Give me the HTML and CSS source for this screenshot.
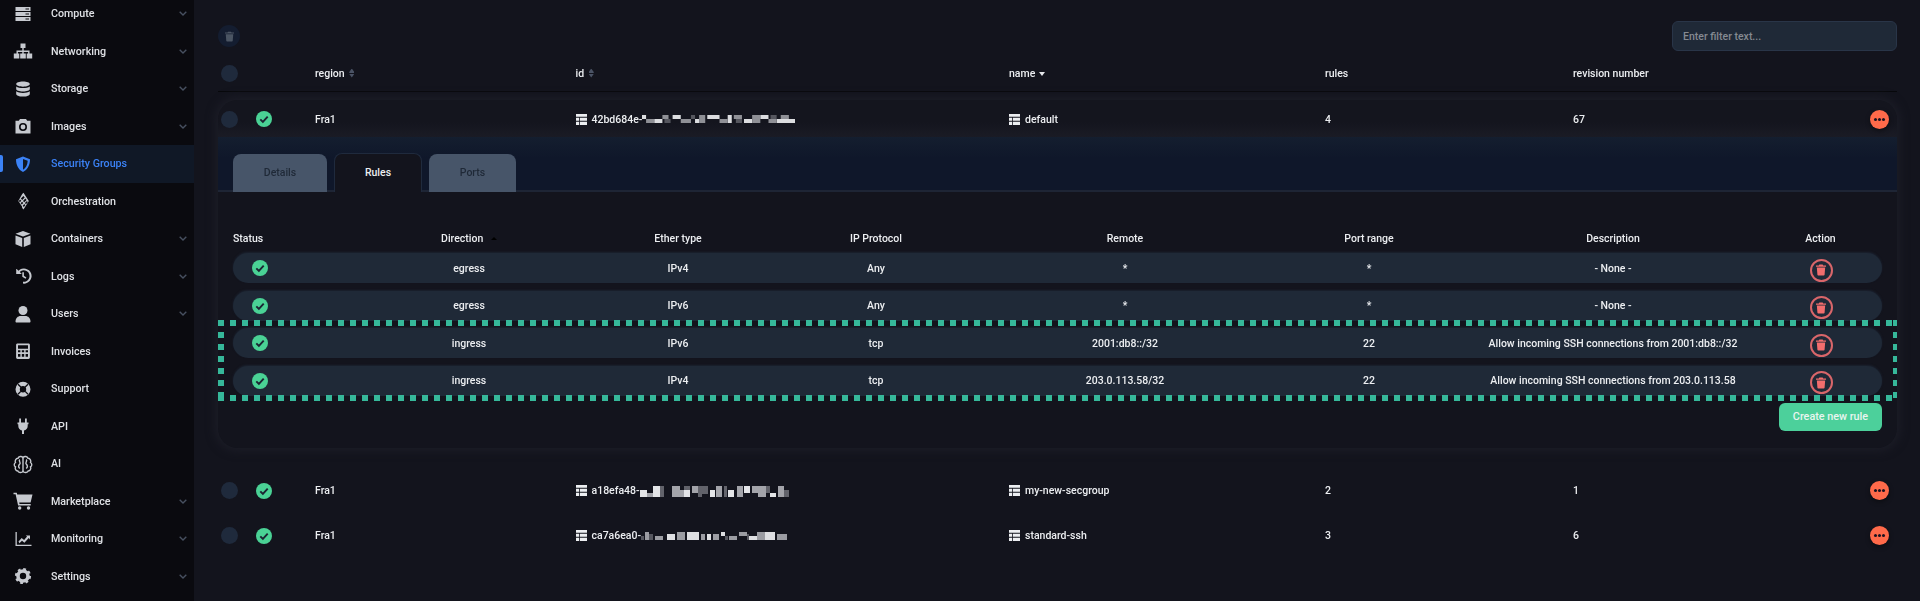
FILE: index.html
```html
<!DOCTYPE html>
<html lang="en">
<head>
<meta charset="utf-8">
<title>Security Groups</title>
<link rel="stylesheet" href="styles.css">
</head>
<body>
<svg class="defs" width="0" height="0" aria-hidden="true">
  <symbol id="check" viewBox="0 0 16 16"><circle cx="8" cy="8" r="8" fill="#4ad295"/><path d="M4.300 8.300l2.600 2.600 4.800-5.200" fill="none" stroke="#1c2533" stroke-width="1.900"/></symbol>
  <symbol id="table" viewBox="0 0 11 11"><path fill="#eceef1" d="M0 0h11v2.800H0zM0 3.700h3.200v3.100H0zM4 3.700h7v3.100H4zM0 7.700h3.200V11H0zM4 7.700h7V11H4z"/></symbol>
  <symbol id="chev" viewBox="0 0 8 5"><path d="M.7.7L4 4l3.300-3.300" fill="none" stroke="#475060" stroke-width="1.400"/></symbol>
  <symbol id="trash" viewBox="0 0 12 13"><path fill="currentColor" d="M4 0h4l.6 1H12v1.500H0V1h3.400zM1 3.500h10l-.7 8.600c0 .5-.5.9-1 .9H2.700c-.5 0-1-.4-1-.9z"/></symbol>
  <symbol id="dots" viewBox="0 0 19 19"><circle cx="5.500" cy="9.500" r="1.500"/><circle cx="9.500" cy="9.500" r="1.500"/><circle cx="13.500" cy="9.500" r="1.500"/></symbol>
  <symbol id="m1" viewBox="0 0 150 8" preserveAspectRatio="none"><path fill="#dcdde0" d="M0 0h4v4H0zM12 4h8v4h-8zM30 0h8v4h-8zM52 4h4v4h-4zM64 0h12v4H64zM84 0h4v8h-4zM100 4h8v4h-8zM116 0h8v4h-8zM132 4h18v4h-18z"/><path fill="#8f9096" d="M4 4h8v4H4zM20 0h6v4h-6zM38 4h10v4H38zM56 0h6v8h-6zM76 4h8v4h-8zM90 0h8v4h-8zM108 0h8v8h-8zM124 4h8v4h-8zM136 0h8v4h-8z"/><path fill="#55565e" d="M22 4h6v4h-6zM48 0h4v4h-4zM92 4h6v4h-6zM126 0h6v4h-6z"/></symbol>
  <symbol id="m2" viewBox="0 0 150 12" preserveAspectRatio="none"><path fill="#e4e5e8" d="M0 5h7v7H0zM13 1h7v11h-7zM44 5h6v7h-6zM70 5h5v7h-5zM88 5h6v7h-6zM104 1h6v7h-6zM130 8h6v4h-6z"/><path fill="#a3a4aa" d="M7 8h6v4H7zM32 1h8v11h-8zM40 5h4v7h-4zM52 1h6v7h-6zM76 1h6v11h-6zM97 1h6v11h-6zM112 1h14v7h-14zM118 8h8v4h-8zM138 1h6v11h-6z"/><path fill="#62636b" d="M20 1h4v11h-4zM44 1h6v4h-6zM58 1h4v11h-4zM62 1h6v8h-6zM84 1h3v11h-3zM126 1h4v7h-4zM144 5h5v7h-5z"/></symbol>
  <symbol id="m3" viewBox="0 0 150 8" preserveAspectRatio="none"><path fill="#dedfe2" d="M26 2h8v6h-8zM46 0h12v8H46zM66 2h4v6h-4zM80 0h4v4h-4zM108 4h8v4h-8zM124 0h10v8h-10z"/><path fill="#9b9ca2" d="M4 0h4v8H4zM14 4h8v4h-8zM36 0h8v8h-8zM60 2h4v6h-4zM72 2h6v6h-6zM88 4h8v4h-8zM98 0h8v4H98zM116 0h8v8h-8zM136 2h10v6h-10z"/><path fill="#55565e" d="M0 4h3v4H0zM8 2h4v6H8zM84 4h3v4h-3zM106 2h2v6h-2z"/></symbol>
</svg>

<aside class="sidebar">
  <nav class="nav">
    <a class="nav-item"><svg class="ico" viewBox="0 0 20 20"><path d="M2.500 3h15v4h-15zM2.500 8h15v4h-15zM2.500 13h15v4h-15z"/><path class="cut" d="M12.500 4.400h3.500v1.200h-3.500zM12.500 9.400h3.500v1.200h-3.500zM12.500 14.400h3.500v1.200h-3.500z"/></svg><span>Compute</span><svg class="chev"><use href="#chev"/></svg></a>
    <a class="nav-item"><svg class="ico" viewBox="0 0 20 20"><path d="M7.500 2.500h5v4.500h-5zM9.300 7h1.400v2.500h5.800v3h-1.400v-1.600H10.700v1.600H9.300v-1.600H4.900v1.600H3.500v-3h5.800zM.8 12.500h5.500v5H.8zM7.200 12.500h5.600v5H7.200zM13.700 12.500h5.500v5h-5.500z"/></svg><span>Networking</span><svg class="chev"><use href="#chev"/></svg></a>
    <a class="nav-item"><svg class="ico" viewBox="0 0 20 20"><path d="M10 2.500c3.900 0 6.800 1.100 6.800 2.600S13.900 7.700 10 7.700 3.200 6.600 3.200 5.100 6.100 2.500 10 2.500zM3.200 7.400c1.500 1.100 4 1.600 6.800 1.600s5.300-.5 6.800-1.600v2.700c0 1.400-2.900 2.500-6.800 2.500s-6.800-1.100-6.800-2.500zM3.200 12.200c1.500 1.100 4 1.700 6.800 1.700s5.300-.6 6.800-1.700v2.800c0 1.500-2.900 2.600-6.800 2.600s-6.800-1.100-6.800-2.600z"/></svg><span>Storage</span><svg class="chev"><use href="#chev"/></svg></a>
    <a class="nav-item"><svg class="ico" viewBox="0 0 20 20"><path fill-rule="evenodd" d="M7 3h6l1.200 1.800h3.300v12.700h-15V4.800h3.300zM10 7a4 4 0 100 8 4 4 0 000-8zm0 1.600a2.400 2.400 0 110 4.800 2.400 2.400 0 010-4.800z"/></svg><span>Images</span><svg class="chev"><use href="#chev"/></svg></a>
    <a class="nav-item active"><svg class="ico" viewBox="0 0 20 20"><path fill-rule="evenodd" d="M10 2.500l7 2.800c0 6-2.500 10.500-7 12.700-4.500-2.200-7-6.700-7-12.700zM10 5v10.800c2.800-1.700 4.500-4.900 4.700-9z"/></svg><span>Security Groups</span></a>
    <a class="nav-item"><svg class="ico" viewBox="0 0 20 20"><path fill-rule="evenodd" d="M10.500 1.800l5.300 8.200-5.300 8.400-1.300-1.500-.2-1.400-3.700-5.500 3.900-6.900zM10.400 5l-2.500 2.600 1.300 1.300L11.700 6.500zM7 8.500L5.900 10l1 1.200 1.400-1.400zM12.300 7.600L10 9.900l1.200 1.300 2.400-2.300zM9 10.700l-1.300 1.500 1.100 1.400 1.500-1.600zM14 10l-2.100 2.100 1 1.200 1.800-2.100zM11.300 13l-1.500 1.700 1 1.200 1.500-1.700z"/></svg><span>Orchestration</span></a>
    <a class="nav-item"><svg class="ico" viewBox="0 0 20 20"><path d="M10 2l7.500 2.700-7.500 2.900-7.500-2.900zM2.500 6.400l6.700 2.500v9L2.500 15.200zM17.500 6.400v8.800l-6.700 2.700v-9z"/></svg><span>Containers</span><svg class="chev"><use href="#chev"/></svg></a>
    <a class="nav-item"><svg class="ico" viewBox="0 0 20 20"><path d="M3.700 3l1.800 1.800A7.600 7.600 0 1110 17.600v-1.900a5.700 5.700 0 10-3.200-9.700l2 2H3.200V3z"/><path d="M9.300 6.300h1.600v3.500l2.500 1.600-.9 1.300-3.200-2z"/></svg><span>Logs</span><svg class="chev"><use href="#chev"/></svg></a>
    <a class="nav-item"><svg class="ico" viewBox="0 0 20 20"><circle cx="10" cy="6.500" r="4.500"/><path d="M2.500 17.500c0-3.500 2.500-5.600 5-5.600h5c2.500 0 5 2.100 5 5.600 0 .6-.5 1-1 1h-13c-.5 0-1-.4-1-1z"/></svg><span>Users</span><svg class="chev"><use href="#chev"/></svg></a>
    <a class="nav-item"><svg class="ico" viewBox="0 0 20 20"><path fill-rule="evenodd" d="M4.500 2.500h11c.8 0 1.400.6 1.400 1.400v12.700c0 .8-.6 1.400-1.400 1.400h-11c-.8 0-1.400-.6-1.400-1.400V3.900c0-.8.6-1.400 1.400-1.400zM5 4.300v3.400h10V4.300zM5 9.300v2h2.400v-2zM8.800 9.300v2h2.400v-2zM12.600 9.300v2H15v-2zM5 13v2.800h2.400V13zM8.800 13v2.800h2.400V13zM12.600 13v2.800H15V13z"/></svg><span>Invoices</span></a>
    <a class="nav-item"><svg class="ico" viewBox="0 0 20 20"><path fill-rule="evenodd" d="M10 2.700a7.500 7.500 0 110 15 7.500 7.500 0 010-15zm0 4.300a3.200 3.200 0 100 6.400 3.200 3.200 0 000-6.400z"/><path class="cut-line" d="M5 5.200l2.800 2.800M15 5.200l-2.800 2.800M5 15.200l2.800-2.800M15 15.200l-2.800-2.800"/></svg><span>Support</span></a>
    <a class="nav-item"><svg class="ico" viewBox="0 0 20 20"><path d="M6.200 2.500h1.800v4H12v-4h1.800v4h1.700v1.800h-.8v1.700c0 2.500-1.700 4-3.700 4.400v3.500H9v-3.500C7 14 5.300 12.500 5.300 10V8.300h-.8V6.500h1.700z"/></svg><span>API</span></a>
    <a class="nav-item"><svg class="ico" viewBox="0 0 20 20"><path class="brain" d="M10 3.600C8.600 1.900 5.600 2.300 5 4.300 2.800 4.500 1.600 6.800 2.500 8.500c-1.700 1-1.700 3.400 0 4.400-.9 1.900.4 3.900 2.300 4.100.6 1.700 3.700 2.200 5.200.4 1.500 1.800 4.600 1.300 5.200-.4 1.900-.2 3.200-2.200 2.300-4.100 1.700-1 1.700-3.400 0-4.400.9-1.700-.3-4-2.500-4.200-.6-2-3.600-2.400-5-.7z"/><path class="brain" d="M10 3.600v14.300M6.800 5.500c-1.800 1.700 1.500 3 0 4.500s-1.700 3 0 4.500M13.200 5.500c1.800 1.700-1.500 3 0 4.500s1.700 3 0 4.500"/></svg><span>AI</span></a>
    <a class="nav-item"><svg class="ico" viewBox="0 0 20 20"><path d="M.5 1.800h3.300l.4 1.800h15.300l-1.900 8H6.200l.3 1.400h11.200v1.500H5.100L2.600 3.300H.5z"/><circle cx="6.700" cy="17" r="1.700"/><circle cx="15.500" cy="17" r="1.700"/></svg><span>Marketplace</span><svg class="chev"><use href="#chev"/></svg></a>
    <a class="nav-item"><svg class="ico" viewBox="0 0 20 20"><path d="M2.500 3h1.300v12.700h14.700V17h-16z"/><path d="M5.500 12.500l3.200-3.400 2.400 2 3-3.500-1.400-1h4.300v3.800l-1.300-1.400-4.300 4.700-2.400-2-2.600 2.500z"/></svg><span>Monitoring</span><svg class="chev"><use href="#chev"/></svg></a>
    <a class="nav-item"><svg class="ico" viewBox="0 0 20 20"><circle class="gear-ring" cx="10" cy="10" r="5"/><circle class="gear-teeth" cx="10" cy="10" r="6.800"/></svg><span>Settings</span><svg class="chev"><use href="#chev"/></svg></a>
  </nav>
</aside>

<main class="main">
  <div class="toolbar">
    <button class="bulk-delete"><svg class="bulk-ico"><use href="#trash"/></svg></button>
    <input class="filter" type="text" placeholder="Enter filter text...">
  </div>

  <div class="grid head">
    <div class="sel"><span class="radio"></span></div>
    <div>region <span class="sort"></span></div>
    <div>id <span class="sort"></span></div>
    <div>name <span class="caret"></span></div>
    <div>rules</div>
    <div>revision number</div>
    <div></div>
  </div>

  <section class="card">
    <div class="grid row first">
      <div class="sel"><span class="radio"></span><svg class="ok"><use href="#check"/></svg></div>
      <div>Fra1</div>
      <div class="idcell"><svg class="tbl"><use href="#table"/></svg>42bd684e-<svg class="mos wide"><use href="#m1"/></svg></div>
      <div class="namecell"><svg class="tbl"><use href="#table"/></svg>default</div>
      <div>4</div>
      <div>67</div>
      <div class="more-cell"><svg class="more"><use href="#dots"/></svg></div>
    </div>

    <div class="tabband">
      <a class="tab t1">Details</a>
      <a class="tab t2 on">Rules</a>
      <a class="tab t3">Ports</a>
    </div>

    <div class="panel">
      <div class="rgrid rhead">
        <div class="left">Status</div>
        <div>Direction <span class="up"></span></div>
        <div>Ether type</div>
        <div>IP Protocol</div>
        <div>Remote</div>
        <div>Port range</div>
        <div>Description</div>
        <div>Action</div>
      </div>
      <div class="rgrid rrow">
        <div class="left"><svg class="rok"><use href="#check"/></svg></div><div>egress</div><div>IPv4</div><div>Any</div><div>*</div><div>*</div><div>- None -</div>
        <div><span class="del"><svg><use href="#trash"/></svg></span></div>
      </div>
      <div class="rgrid rrow">
        <div class="left"><svg class="rok"><use href="#check"/></svg></div><div>egress</div><div>IPv6</div><div>Any</div><div>*</div><div>*</div><div>- None -</div>
        <div><span class="del"><svg><use href="#trash"/></svg></span></div>
      </div>
      <div class="rgrid rrow">
        <div class="left"><svg class="rok"><use href="#check"/></svg></div><div>ingress</div><div>IPv6</div><div>tcp</div><div>2001:db8::/32</div><div>22</div><div>Allow incoming SSH connections from 2001:db8::/32</div>
        <div><span class="del"><svg><use href="#trash"/></svg></span></div>
      </div>
      <div class="rgrid rrow">
        <div class="left"><svg class="rok"><use href="#check"/></svg></div><div>ingress</div><div>IPv4</div><div>tcp</div><div>203.0.113.58/32</div><div>22</div><div>Allow incoming SSH connections from 203.0.113.58</div>
        <div><span class="del"><svg><use href="#trash"/></svg></span></div>
      </div>
      <div class="actions"><button class="create">Create new rule</button></div>
      <div class="highlight"></div>
    </div>
  </section>

  <div class="grid row plain r2">
    <div class="sel"><span class="radio"></span><svg class="ok"><use href="#check"/></svg></div>
    <div>Fra1</div>
    <div class="idcell"><svg class="tbl"><use href="#table"/></svg>a18efa48-<svg class="mos tall"><use href="#m2"/></svg></div>
    <div class="namecell"><svg class="tbl"><use href="#table"/></svg>my-new-secgroup</div>
    <div>2</div>
    <div>1</div>
    <div class="more-cell"><svg class="more"><use href="#dots"/></svg></div>
  </div>
  <div class="grid row plain">
    <div class="sel"><span class="radio"></span><svg class="ok"><use href="#check"/></svg></div>
    <div>Fra1</div>
    <div class="idcell"><svg class="tbl"><use href="#table"/></svg>ca7a6ea0-<svg class="mos"><use href="#m3"/></svg></div>
    <div class="namecell"><svg class="tbl"><use href="#table"/></svg>standard-ssh</div>
    <div>3</div>
    <div>6</div>
    <div class="more-cell"><svg class="more"><use href="#dots"/></svg></div>
  </div>
</main>
</body>
</html>
```

FILE: styles.css
```css
* { box-sizing: border-box; }
html, body { margin: 0; height: 100%; overflow: hidden; }
body {
  display: flex;
  background: #13141d;
  color: #eceef1;
  font: 500 10.5px Roboto, "Liberation Sans", sans-serif;
}
.defs { position: absolute; }

.sidebar { width: 194px; flex: none; background: #0a0a0f; overflow: hidden; filter: blur(.3px); }
.nav { margin-top: -5px; display: flex; flex-direction: column; }
.nav-item {
  position: relative;
  height: 37.5px;
  display: flex;
  align-items: center;
  padding: 0 7px 0 12.5px;
  font-size: 10.7px;
  color: #dfe1e5;
}
.nav-item .ico { width: 20px; height: 20px; flex: none; margin-right: 18.5px; fill: #c6c9cf; }
.nav-item .chev { width: 8px; height: 5px; margin-left: auto; }
.nav-item.active { background: #101826; color: #3b82f6; }
.nav-item.active .ico { fill: #3b82f6; }
.nav-item.active::before {
  content: "";
  position: absolute;
  left: 0; top: 10px;
  width: 2.500px; height: 17px;
  background: #3b82f6;
  border-radius: 0 2px 2px 0;
}
.cut { fill: #0a0a0f; }
.cut-line { fill: none; stroke: #0a0a0f; stroke-width: 1.3; }
.brain { fill: none; stroke: #c6c9cf; stroke-width: 1.4; }
.gear-ring { fill: none; stroke: #c6c9cf; stroke-width: 3.6; }
.gear-teeth { fill: none; stroke: #c6c9cf; stroke-width: 2.6; stroke-dasharray: 2.7 2.64; }

.main { flex: 1; min-width: 0; padding: 0 23px 0 24px; filter: blur(.3px); }

.toolbar { height: 55px; display: flex; align-items: flex-start; justify-content: space-between; padding-top: 21px; }
.bulk-delete {
  width: 22px; height: 22px; margin: 4px 0 0 0;
  padding: 0; border: 0; border-radius: 50%;
  background: #141d30; color: #4b5563;
  display: flex; align-items: center; justify-content: center;
}
.bulk-ico { width: 9px; height: 11px; color: #4b5563; }
.filter {
  width: 225px; height: 30px;
  padding: 0 10px;
  background: #1f2937;
  border: 1px solid #293548;
  border-radius: 6px;
  color: #e5e7eb;
  font: 500 10.5px Roboto, sans-serif;
}
.filter::placeholder { color: #858a92; opacity: 1; }

.grid {
  display: grid;
  grid-template-columns: 97px 260.5px 433.5px 316px 248px 1fr 46px;
  align-items: center;
}
.head { height: 37px; border-bottom: 1px solid #08090c; }
.sel { display: flex; align-items: center; }
.radio { width: 17px; height: 17px; border-radius: 50%; background: #1f2a3c; margin-left: 3px; }
.ok { width: 16px; height: 16px; margin-left: 18px; }
.sort { display: inline-block; width: 5px; height: 9px; margin-left: 2px; vertical-align: -1px;
  background: linear-gradient(#4a5365 0 40%, transparent 40% 55%, #4a5365 55%);
  clip-path: polygon(50% 0, 100% 40%, 100% 60%, 50% 100%, 0 60%, 0 40%);
}
.caret { display: inline-block; margin-left: 1px; vertical-align: 1px; border: 3.500px solid transparent; border-top: 4px solid #e5e7eb; border-bottom: 0; }

.card {
  margin-top: 8px;
  border-radius: 20px;
  background: #13141d;
  box-shadow: 0 0 10px 3px #1c1d27;
  overflow: hidden;
  height: 348px;
}
.row { height: 37px; }
.first { background: linear-gradient(#14151e 60%, #1a1b25); padding-top: 1px; }
.idcell, .namecell { display: flex; align-items: center; }
.tbl { width: 11px; height: 11px; margin-right: 5px; flex: none; }
.mos { width: 150px; height: 8px; flex: none; filter: blur(.6px); }
.mos.wide { width: 153px; }
.mos.tall { height: 12px; }
.more-cell { display: flex; justify-content: flex-end; padding-right: 8px; }
.more { width: 19px; height: 19px; border-radius: 50%; background: #ff6a4a; fill: #1a1320; box-shadow: 0 2px 5px #00000066; }

.tabband {
  height: 55px;
  padding: 17px 0 0 15px;
  display: flex;
  background: linear-gradient(#141e2f, #0f172a 40%);
  border-bottom: 2px solid #1e2535;
}
.tab {
  height: 38px;
  display: flex; align-items: center; justify-content: center;
  padding-bottom: 2px;
  border-radius: 8px 8px 0 0;
  background: #475569;
  color: #1f2937;
}
.t1 { width: 94px; }
.t2 { width: 88px; margin-left: 7px; }
.t3 { width: 87px; margin-left: 7px; }
.tab.on { background: #13141d; color: #eceef1; border: 1px solid #1f2a3d; border-bottom: 0; height: 39px; margin-top: -1px; z-index: 1; }

.panel { position: relative; padding: 0 15px; }
.rgrid {
  display: grid;
  grid-template-columns: 127px 218px 200px 196px 302px 186px 302px 1fr;
  align-items: center;
  text-align: center;
}
.rhead { height: 61px; padding-top: 32px; }
.rhead > div:last-child { padding-right: 5px; }
.left { text-align: left; }
.up { display: inline-block; margin-left: 5px; vertical-align: 2px; border: 3.500px solid transparent; border-bottom: 3.500px solid #000; border-top: 0; }
.rrow { height: 30px; margin-bottom: 7.500px; background: #1f2937; border-radius: 15px; box-shadow: 0 -1px 2px #1b2230; }
.rrow > div:last-child { padding-right: 4px; }
.rok { width: 16px; height: 16px; margin-left: 18.500px; display: block; }
.del {
  display: inline-flex; align-items: center; justify-content: center;
  width: 23px; height: 23px; margin-top: 4px;
  border: 2px solid #d9666a; border-radius: 50%;
  color: #f26d6d;
  vertical-align: middle;
}
.del svg { width: 10px; height: 12px; }
.actions { display: flex; justify-content: flex-end; margin-top: -0.500px; }
.create {
  width: 103px; height: 28px;
  border: 0; border-radius: 6px;
  background: #4cd09b;
  color: #e8f5ef;
  font: 500 10.8px Roboto, sans-serif;
}
.highlight {
  position: absolute;
  left: 0; right: -2px; top: 128px; height: 81px;
  background:
    repeating-linear-gradient(90deg, #36b89a 0 6px, transparent 6px 12px) top left / 100% 6px no-repeat,
    repeating-linear-gradient(90deg, #36b89a 0 6px, transparent 6px 12px) bottom left / 100% 6px no-repeat,
    repeating-linear-gradient(180deg, #36b89a 0 6px, transparent 6px 12px) top left / 6px 100% no-repeat,
    repeating-linear-gradient(180deg, #36b89a 0 6px, transparent 6px 12px) top right / 6px 100% no-repeat;
}

.plain { height: 45px; }
.r2 { margin-top: 20px; }
```
